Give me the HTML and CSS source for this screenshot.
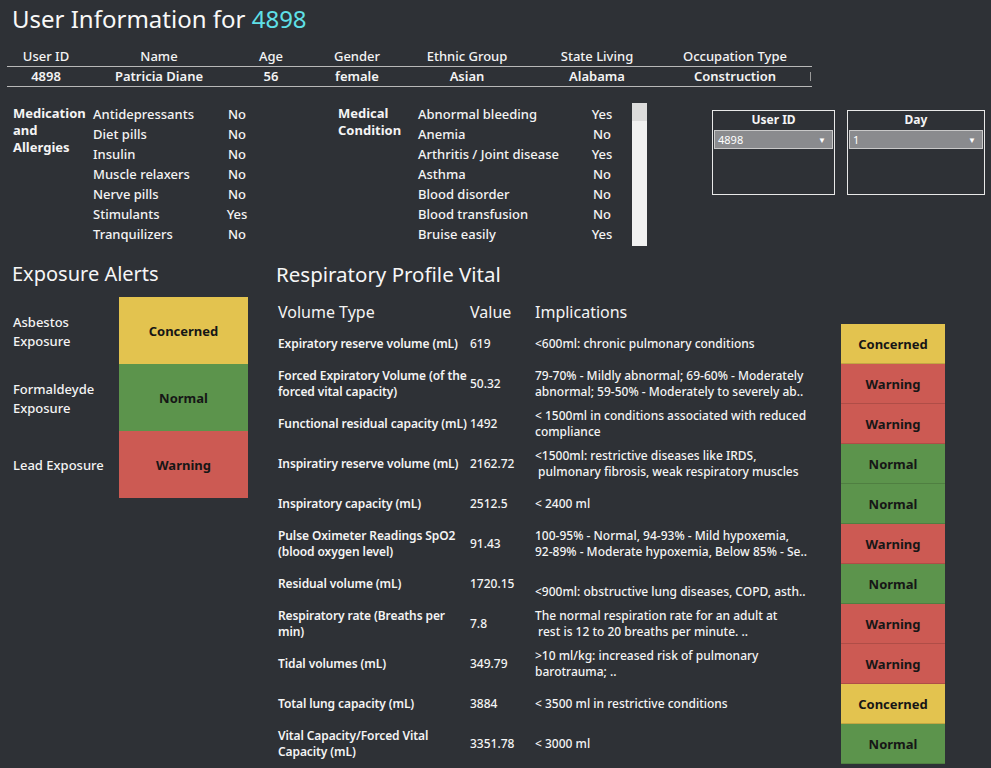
FILE: index.html
```html
<!DOCTYPE html>
<html>
<head>
<meta charset="utf-8">
<link rel="stylesheet" href="styles.css">
</head>
<body>
<div class="page">
  <h1 class="title">User Information for <span class="hl">4898</span></h1>

  <div class="info">
    <div class="info-row info-head">
      <div>User ID</div><div>Name</div><div>Age</div><div>Gender</div><div>Ethnic Group</div><div>State Living</div><div>Occupation Type</div>
    </div>
    <div class="info-row info-data">
      <div>4898</div><div>Patricia Diane</div><div>56</div><div>female</div><div>Asian</div><div>Alabama</div><div>Construction</div>
    </div>
    <span class="info-mark"></span>
  </div>

  <div class="mid">
    <div class="med">
      <div class="med-label">Medication and Allergies</div>
      <div class="med-list">
        <div class="med-row"><span>Antidepressants</span><span class="yn">No</span></div>
        <div class="med-row"><span>Diet pills</span><span class="yn">No</span></div>
        <div class="med-row"><span>Insulin</span><span class="yn">No</span></div>
        <div class="med-row"><span>Muscle relaxers</span><span class="yn">No</span></div>
        <div class="med-row"><span>Nerve pills</span><span class="yn">No</span></div>
        <div class="med-row"><span>Stimulants</span><span class="yn">Yes</span></div>
        <div class="med-row"><span>Tranquilizers</span><span class="yn">No</span></div>
      </div>
    </div>
    <div class="cond">
      <div class="cond-label">Medical Condition</div>
      <div class="cond-list">
        <div class="cond-row"><span>Abnormal bleeding</span><span class="yn">Yes</span></div>
        <div class="cond-row"><span>Anemia</span><span class="yn">No</span></div>
        <div class="cond-row"><span>Arthritis / Joint disease</span><span class="yn">Yes</span></div>
        <div class="cond-row"><span>Asthma</span><span class="yn">No</span></div>
        <div class="cond-row"><span>Blood disorder</span><span class="yn">No</span></div>
        <div class="cond-row"><span>Blood transfusion</span><span class="yn">No</span></div>
        <div class="cond-row"><span>Bruise easily</span><span class="yn">Yes</span></div>
      </div>
      <div class="scroll"><div class="thumb"></div></div>
    </div>
    <div class="filters">
      <div class="filter f-user">
        <div class="f-title">User ID</div>
        <div class="dd"><span>4898</span><span class="arr">▼</span></div>
      </div>
      <div class="filter f-day">
        <div class="f-title">Day</div>
        <div class="dd"><span>1</span><span class="arr">▼</span></div>
      </div>
    </div>
  </div>

  <div class="lower">
    <div class="expo">
      <h2 class="sec">Exposure Alerts</h2>
      <div class="expo-grid">
        <div class="expo-label">Asbestos<br>Exposure</div><div class="st st-c">Concerned</div>
        <div class="expo-label">Formaldeyde<br>Exposure</div><div class="st st-n">Normal</div>
        <div class="expo-label">Lead Exposure</div><div class="st st-w">Warning</div>
      </div>
    </div>
    <div class="resp">
      <h2 class="sec">Respiratory Profile Vital</h2>
      <div class="rt">
        <div class="rh">Volume Type</div><div class="rh">Value</div><div class="rh">Implications</div><div class="rh"></div>

        <div class="rl">Expiratory reserve volume (mL)</div><div class="rv">619</div><div class="ri">&lt;600ml: chronic pulmonary conditions</div><div class="rs st-c">Concerned</div>

        <div class="rl">Forced Expiratory Volume (of the forced vital capacity)</div><div class="rv">50.32</div><div class="ri">79-70% - Mildly abnormal; 69-60% - Moderately<br>abnormal; 59-50% - Moderately to severely ab..</div><div class="rs st-w">Warning</div>

        <div class="rl">Functional residual capacity (mL)</div><div class="rv">1492</div><div class="ri">&lt; 1500ml in conditions associated with reduced<br>compliance</div><div class="rs st-w">Warning</div>

        <div class="rl">Inspiratiry reserve volume (mL)</div><div class="rv">2162.72</div><div class="ri">&lt;1500ml: restrictive diseases like IRDS,<br>&nbsp;pulmonary fibrosis, weak respiratory muscles</div><div class="rs st-n">Normal</div>

        <div class="rl">Inspiratory capacity (mL)</div><div class="rv">2512.5</div><div class="ri">&lt; 2400 ml</div><div class="rs st-n">Normal</div>

        <div class="rl">Pulse Oximeter Readings SpO2 (blood oxygen level)</div><div class="rv">91.43</div><div class="ri">100-95% - Normal, 94-93% - Mild hypoxemia,<br>92-89% - Moderate hypoxemia, Below 85% - Se..</div><div class="rs st-w">Warning</div>

        <div class="rl">Residual volume (mL)</div><div class="rv">1720.15</div><div class="ri ri-low">&lt;900ml: obstructive lung diseases, COPD, asth..</div><div class="rs st-n">Normal</div>

        <div class="rl">Respiratory rate (Breaths per min)</div><div class="rv">7.8</div><div class="ri">The normal respiration rate for an adult at<br>&nbsp;rest is 12 to 20 breaths per minute. ..</div><div class="rs st-w">Warning</div>

        <div class="rl">Tidal volumes (mL)</div><div class="rv">349.79</div><div class="ri">&gt;10 ml/kg: increased risk of pulmonary<br>barotrauma; ..</div><div class="rs st-w">Warning</div>

        <div class="rl">Total lung capacity (mL)</div><div class="rv">3884</div><div class="ri">&lt; 3500 ml in restrictive conditions</div><div class="rs st-c">Concerned</div>

        <div class="rl">Vital Capacity/Forced Vital Capacity (mL)</div><div class="rv">3351.78</div><div class="ri">&lt; 3000 ml</div><div class="rs st-n">Normal</div>
      </div>
    </div>
  </div>
</div>
</body>
</html>
```

FILE: styles.css
```css
* { box-sizing: border-box; }
html, body { margin: 0; padding: 0; }
body {
  background: #2e3136;
  color: #f4f4f4;
  font-family: "Noto Sans", "Open Sans", sans-serif;
  width: 991px;
  height: 768px;
  overflow: hidden;
}

.title {
  margin: 0;
  padding: 4px 0 0 12px;
  font-size: 24px;
  font-weight: 400;
  line-height: 30px;
  height: 46px;
  color: #f8f8f8;
}
.hl { color: #5fe0e8; }

/* info table */
.info { position: relative; margin-left: 7px; width: 805px; }
.info-row {
  display: grid;
  grid-template-columns: 78px 148px 76px 96px 124px 136px 140px 7px;
  height: 20px;
  border-bottom: 1px solid #b8b8b8;
  font-size: 13px;
  line-height: 19px;
  text-align: center;
}
.info-head { height: 21px; padding-top: 1px; font-weight: 500; }
.info-data { font-weight: 600; }
.info-mark {
  position: absolute;
  right: 1px;
  top: 26px;
  width: 1px;
  height: 9px;
  background: #9a9a9a;
}

/* middle */
.mid {
  display: flex;
  margin-top: 17px;
  height: 146px;
}
.med { display: flex; margin-left: 13px; width: 320px; }
.med-label {
  width: 80px;
  font-size: 13px;
  font-weight: 700;
  line-height: 17px;
  padding-top: 1px;
}
.med-list { width: 157px; }
.med-row, .cond-row {
  display: flex;
  justify-content: space-between;
  height: 20px;
  font-size: 13px;
  font-weight: 500;
  line-height: 20px;
}
.med-row span:first-child, .cond-row span:first-child { white-space: nowrap; }
.yn { width: 26px; text-align: center; }

.cond { display: flex; margin-left: 5px; width: 309px; position: relative; }
.cond-label {
  width: 80px;
  font-size: 13px;
  font-weight: 700;
  line-height: 17px;
  padding-top: 1px;
}
.cond-list { width: 197px; }
.scroll {
  margin-left: 17px;
  margin-top: -1px;
  width: 15px;
  height: 143px;
  background: #f1f1f1;
}
.thumb { height: 18px; background: #dcdcdc; }

.filters { display: flex; margin-left: 65px; margin-top: 6px; gap: 12px; }
.filter {
  border: 1px solid #e8e8e8;
  height: 85px;
  padding: 1px;
}
.f-user { width: 123px; }
.f-day { width: 138px; }
.f-title {
  font-size: 12px;
  font-weight: 700;
  text-align: center;
  line-height: 16px;
  height: 18px;
}
.dd {
  display: flex;
  justify-content: space-between;
  align-items: center;
  height: 19px;
  background: #8a8b8e;
  border: 1px solid #c9c9c9;
  padding: 0 6px 0 3px;
  font-size: 11px;
  color: #fff;
}
.arr { font-size: 8px; }

/* lower */
.lower { display: flex; margin-top: 12px; }
.sec {
  margin: 0;
  font-size: 20.5px;
  font-weight: 400;
  line-height: 24px;
  height: 34px;
  color: #f6f6f6;
}
.expo { width: 264px; padding-left: 12px; }
.expo .sec { font-size: 20px; }
.expo-grid {
  display: grid;
  grid-template-columns: 107px 129px;
  grid-auto-rows: 67px;
  margin-top: 1px;
}
.expo-label {
  display: flex;
  align-items: center;
  font-size: 13px;
  font-weight: 500;
  line-height: 19px;
  padding-left: 1px;
  padding-top: 2px;
}
.st {
  display: flex;
  align-items: center;
  justify-content: center;
  font-size: 13px;
  font-weight: 700;
  color: #161616;
}
.st-c { background: #e3c34f; }
.st-n { background: #5c944c; }
.st-w { background: #cc5a53; }

.resp { padding-left: 12px; }
.rt {
  display: grid;
  grid-template-columns: 192px 65px 306px 104px;
  grid-template-rows: 28px repeat(11, 40px);
  margin-left: 2px;
}
.rh {
  font-size: 16px;
  line-height: 24px;
  padding-top: 4px;
}
.rl, .rv, .ri {
  display: flex;
  align-items: center;
  font-size: 12px;
  line-height: 16px;
}
.rv, .ri { font-weight: 500; }
.rl { font-weight: 600; padding-right: 2px; letter-spacing: -0.1px; }
.ri { white-space: nowrap; }
.ri-low { padding-top: 16px; }
.rs {
  display: flex;
  align-items: center;
  justify-content: center;
  font-size: 13px;
  font-weight: 700;
  color: #161616;
  border-bottom: 1px solid rgba(0,0,0,0.14);
}
```
